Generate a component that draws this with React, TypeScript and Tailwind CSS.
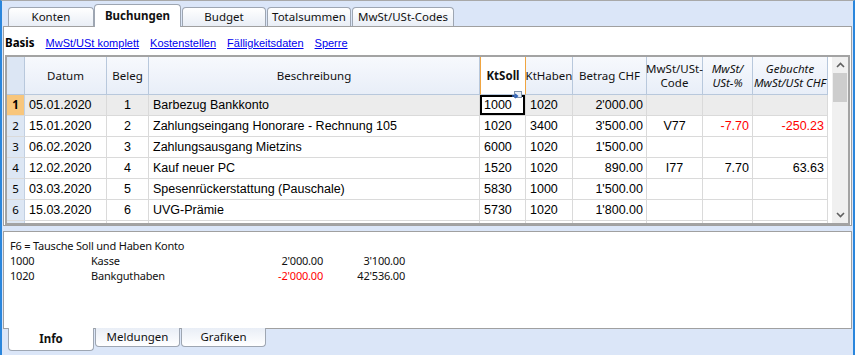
import React from 'react';

type Row = {
  nr: number;
  datum: string;
  beleg: string;
  text: string;
  soll: string;
  haben: string;
  betrag: string;
  code?: string;
  proz?: string;
  mwst?: string;
};

const rows: Row[] = [
  { nr: 1, datum: '05.01.2020', beleg: '1', text: 'Barbezug Bankkonto', soll: '1000', haben: '1020', betrag: "2'000.00" },
  { nr: 2, datum: '15.01.2020', beleg: '2', text: 'Zahlungseingang Honorare - Rechnung 105', soll: '1020', haben: '3400', betrag: "3'500.00", code: 'V77', proz: '-7.70', mwst: '-250.23' },
  { nr: 3, datum: '06.02.2020', beleg: '3', text: 'Zahlungsausgang Mietzins', soll: '6000', haben: '1020', betrag: "1'500.00" },
  { nr: 4, datum: '12.02.2020', beleg: '4', text: 'Kauf neuer PC', soll: '1520', haben: '1020', betrag: '890.00', code: 'I77', proz: '7.70', mwst: '63.63' },
  { nr: 5, datum: '03.03.2020', beleg: '5', text: 'Spesenrückerstattung (Pauschale)', soll: '5830', haben: '1000', betrag: "1'500.00" },
  { nr: 6, datum: '15.03.2020', beleg: '6', text: 'UVG-Prämie', soll: '5730', haben: '1020', betrag: "1'800.00" },
];

const ui = "font-['Noto_Sans',sans-serif]";
const arial = "font-['Liberation_Sans',Arial,sans-serif]";
const data = `${arial} text-[12.5px]`;

const TopTab = ({ label, active, w }: { label: string; active?: boolean; w: string }) => (
  <div
    className={`${w} ${ui} flex items-center justify-center rounded-t-[4px] border border-[#9ea6b2] text-[11.5px] text-[#111] ${
      active
        ? 'relative z-10 -mb-[1px] h-[23px] border-b-0 bg-white font-bold'
        : 'h-[19px] border-b-0 bg-linear-to-b from-white to-[#e9eef6]'
    }`}
  >
    {label}
  </div>
);

const BottomTab = ({ label, active, w }: { label: string; active?: boolean; w: string }) => (
  <div
    className={`${w} ${ui} flex items-center justify-center rounded-b-[4px] border border-t-0 border-[#9ea6b2] text-[11.5px] text-[#111] ${
      active ? 'h-[23px] bg-white font-bold' : 'h-[19px] bg-linear-to-t from-white to-[#e9eef6]'
    }`}
  >
    {label}
  </div>
);

const Head = ({ children, italic, cls = '' }: { children: React.ReactNode; italic?: boolean; cls?: string }) => (
  <div
    className={`flex h-[38px] flex-col items-center justify-center border-r border-b border-[#b8c8dc] bg-linear-to-b from-[#f7f9fd] to-[#e8eef8] text-center text-[11.5px] leading-[14px] text-[#111] ${ui} ${
      italic ? 'italic' : ''
    } ${cls}`}
  >
    {children}
  </div>
);

const Cell = ({ children, cls = '' }: { children?: React.ReactNode; cls?: string }) => (
  <div className={`flex h-[21px] items-center overflow-hidden whitespace-nowrap border-r border-b border-[#dadada] ${data} ${cls}`}>
    {children}
  </div>
);

const ChevronUp = () => (
  <svg width="9" height="6" viewBox="0 0 9 6">
    <path d="M1 5 L4.5 1.5 L8 5" fill="none" stroke="#606060" strokeWidth="1.6" />
  </svg>
);

const ChevronDown = () => (
  <svg width="9" height="6" viewBox="0 0 9 6">
    <path d="M1 1 L4.5 4.5 L8 1" fill="none" stroke="#606060" strokeWidth="1.6" />
  </svg>
);

const App: React.FC = () => {
  return (
    <div className="flex h-[355px] w-[855px] flex-col overflow-hidden border-t border-r-2 border-l-2 border-t-[#a8a8a8] border-r-[#2a86dc] border-l-[#2a86dc] bg-[#dbe6f8]">
      {/* top tabs */}
      <div className="flex h-[25px] items-end pl-[6px]">
        <TopTab label="Konten" w="w-[86px]" />
        <TopTab label="Buchungen" active w="w-[87px]" />
        <div className="ml-[1px]">
          <TopTab label="Budget" w="w-[84px]" />
        </div>
        <div className="ml-[1px]">
          <TopTab label="Totalsummen" w="w-[84px]" />
        </div>
        <div className="ml-[1px]">
          <TopTab label="MwSt/USt-Codes" w="w-[102px]" />
        </div>
      </div>

      {/* main panel */}
      <div className="ml-[1px] h-[200px] w-[849px] border border-[#a0a0a0] bg-white">
        <div className={`flex h-[28px] items-center gap-[11px] pt-[4px] pl-[1px] text-[11px] ${arial}`}>
          <span className={`font-bold text-black ${ui} text-[11.5px]`}>Basis</span>
          <span className="text-[#0000ee] underline">MwSt/USt komplett</span>
          <span className="text-[#0000ee] underline">Kostenstellen</span>
          <span className="text-[#0000ee] underline">Fälligkeitsdaten</span>
          <span className="text-[#0000ee] underline">Sperre</span>
        </div>

        <div className="ml-[1px] flex h-[170px] w-[845px] overflow-hidden border-2 border-[#a3a3a3]">
          <div className="w-[821px] overflow-hidden">
            <div className="grid grid-cols-[18px_82px_42px_331px_46px_47px_74px_56px_50px_75px]">
              <div className="h-[38px] border-r border-b border-[#b8c8dc] bg-[#dce6f4]" />
              <Head>Datum</Head>
              <Head>Beleg</Head>
              <Head>Beschreibung</Head>
              <Head cls="!bg-none bg-linear-to-b !from-[#fde9c2] !to-[#f5c56d] border-x border-x-[#f0a541] font-bold">KtSoll</Head>
              <Head>KtHaben</Head>
              <Head>Betrag CHF</Head>
              <Head>
                <span>MwSt/USt-</span>
                <span>Code</span>
              </Head>
              <Head italic>
                <span>MwSt/</span>
                <span>USt-%</span>
              </Head>
              <Head italic>
                <span>Gebuchte</span>
                <span>MwSt/USt CHF</span>
              </Head>

              {rows.map((r) => {
                const first = r.nr === 1;
                const bg = first ? 'bg-[#ececec]' : 'bg-white';
                return (
                  <React.Fragment key={r.nr}>
                    <Cell
                      cls={`justify-center !border-r-[#c2d0e2] ${ui} !text-[11.5px] ${
                        first ? 'bg-[#f8c67c] font-bold' : 'bg-[#dde7f4]'
                      }`}
                    >
                      {r.nr}
                    </Cell>
                    <Cell cls={`${bg} pl-[4px]`}>{r.datum}</Cell>
                    <Cell cls={`${bg} justify-center`}>{r.beleg}</Cell>
                    <Cell cls={`${bg} pl-[4px]`}>{r.text}</Cell>
                    {first ? (
                      <div className="relative h-[21px] border-r border-b border-[#dadada] bg-white">
                        <div className={`flex h-[20px] items-center border-2 border-black pl-[2px] ${data}`}>{r.soll}</div>
                        <svg className="absolute -top-[4px] right-[3px]" width="10" height="9" viewBox="0 0 10 9">
                          <rect x="2.5" y="0.5" width="7" height="6" fill="#e8eef6" stroke="#7f93ad" />
                          <path d="M0 5 H5 M3 3 L5.5 5 L3 7" fill="none" stroke="#2f62b8" strokeWidth="1.3" />
                        </svg>
                      </div>
                    ) : (
                      <Cell cls={`${bg} pl-[4px]`}>{r.soll}</Cell>
                    )}
                    <Cell cls={`${bg} pl-[4px]`}>{r.haben}</Cell>
                    <Cell cls={`${bg} justify-end pr-[3px]`}>{r.betrag}</Cell>
                    <Cell cls={`${bg} justify-center`}>{r.code}</Cell>
                    <Cell cls={`${bg} justify-end pr-[3px] ${r.proz?.startsWith('-') ? 'text-[#ff0000]' : ''}`}>{r.proz}</Cell>
                    <Cell cls={`${bg} justify-end pr-[3px] ${r.mwst?.startsWith('-') ? 'text-[#ff0000]' : ''}`}>{r.mwst}</Cell>
                  </React.Fragment>
                );
              })}

              <Cell cls="bg-[#dde7f4] !border-r-[#c2d0e2]" />
              <Cell />
              <Cell />
              <Cell />
              <Cell />
              <Cell />
              <Cell />
              <Cell />
              <Cell />
              <Cell />
            </div>
          </div>
          <div className="w-[4px]" />
          <div className="flex w-[16px] flex-col bg-[#f0f0f0]">
            <div className="flex h-[16px] items-center justify-center">
              <ChevronUp />
            </div>
            <div className="mx-[1px] h-[29px] bg-[#cdcdcd]" />
            <div className="flex-1" />
            <div className="flex h-[16px] items-center justify-center">
              <ChevronDown />
            </div>
          </div>
        </div>
      </div>

      {/* info panel */}
      <div className="mt-[5px] ml-[1px] h-[98px] w-[849px] border border-[#a0a0a0] bg-white">
        <div className={`pt-[6px] pl-[6px] text-[11px] leading-[15px] tracking-[-0.2px] text-[#111] ${ui}`}>
          <div>F6 = Tausche Soll und Haben Konto</div>
          <div className="grid grid-cols-[81px_150px_82px_82px]">
            <span>1000</span>
            <span>Kasse</span>
            <span className="text-right">2'000.00</span>
            <span className="text-right">3'100.00</span>
            <span>1020</span>
            <span>Bankguthaben</span>
            <span className="text-right text-[#ff0000]">-2'000.00</span>
            <span className="text-right">42'536.00</span>
          </div>
        </div>
      </div>

      {/* bottom tabs */}
      <div className="-mt-[1px] flex items-start pl-[6px]">
        <BottomTab label="Info" active w="w-[86px]" />
        <div className="ml-[1px]">
          <BottomTab label="Meldungen" w="w-[85px]" />
        </div>
        <div className="ml-[1px]">
          <BottomTab label="Grafiken" w="w-[85px]" />
        </div>
      </div>
    </div>
  );
};

export default App;
